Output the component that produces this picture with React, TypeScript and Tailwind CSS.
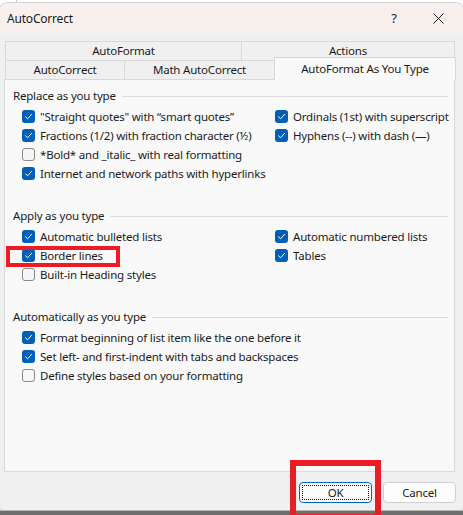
import React from "react";

type Item = { label: string; checked: boolean };

const Check = ({ checked }: { checked: boolean }) =>
  checked ? (
    <span className="flex h-[13px] w-[13px] shrink-0 items-center justify-center rounded-[3px] bg-[#005fb8]">
      <svg width="9" height="9" viewBox="0 0 9 9" fill="none">
        <path d="M1.5 4.8 3.6 6.8 7.6 2.3" stroke="#ffffff" strokeWidth="1" strokeLinecap="round" strokeLinejoin="round" />
      </svg>
    </span>
  ) : (
    <span className="h-[13px] w-[13px] shrink-0 rounded-[3px] border border-[#8a8a8a] bg-[#f6f6f6]" />
  );

const Row = ({ item }: { item: Item }) => (
  <div className="flex h-[19px] items-center gap-[5px]">
    <Check checked={item.checked} />
    <span className="whitespace-nowrap">{item.label}</span>
  </div>
);

const Section = ({
  title,
  left,
  right = [],
  className = "",
}: {
  title: string;
  left: Item[];
  right?: Item[];
  className?: string;
}) => (
  <div className={className}>
    <div className="flex h-4 items-center gap-[6px]">
      <span className="whitespace-nowrap">{title}</span>
      <div className="h-px flex-1 bg-[#dcdcdc]" />
    </div>
    <div className="mt-[3px] ml-[9px] grid grid-cols-[253px_1fr]">
      <div className="flex flex-col">
        {left.map((it) => (
          <Row key={it.label} item={it} />
        ))}
      </div>
      <div className="flex flex-col">
        {right.map((it) => (
          <Row key={it.label} item={it} />
        ))}
      </div>
    </div>
  </div>
);

const Tab = ({ label, className = "" }: { label: string; className?: string }) => (
  <div
    className={
      "flex items-center justify-center border-t border-l border-[#d9d9d9] bg-[#f0f0f0] " + className
    }
  >
    {label}
  </div>
);

export default function App() {
  return (
    <div
      className="relative h-[515px] w-[463px] overflow-hidden bg-white text-[11.5px] tracking-[-0.2px] text-[#1b1b1b]"
      style={{ fontFamily: '"Noto Sans", "Liberation Sans", sans-serif' }}
    >
      {/* window behind */}
      <div className="h-[3px] w-[17px] border-r border-[#c8c8c8]" />

      <div className="flex h-[507px] flex-col overflow-hidden rounded-t-[7px] rounded-b-[4px] bg-[#f0f0f0] shadow-[0_0_0_1px_#d6d6d6]">
        {/* title bar */}
        <div className="flex h-[31px] shrink-0 items-center bg-[#f8f0ec] pl-[7px]">
          <span className="text-[12px]">AutoCorrect</span>
          <span className="ml-auto w-[40px] text-center text-[13px]">?</span>
          <span className="mr-[5px] ml-[4px] flex w-[40px] justify-center">
            <svg width="11" height="11" viewBox="0 0 11 11">
              <path d="M0.5 0.5 10.5 10.5 M10.5 0.5 0.5 10.5" stroke="#1b1b1b" strokeWidth="1" />
            </svg>
          </span>
        </div>

        {/* tabs */}
        <div className="mt-[7px] flex flex-col px-[4px]">
          <div className="ml-px flex h-[19px] w-[450px]">
            <Tab label="AutoFormat" className="w-[236px]" />
            <Tab label="Actions" className="flex-1 border-r" />
          </div>
          <div className="relative ml-px flex h-[19px] w-[450px]">
            <Tab label="AutoCorrect" className="w-[119px]" />
            <Tab label="Math AutoCorrect" className="w-[150px]" />
            <div className="absolute top-[-3px] right-[-1px] z-10 flex h-[23px] w-[182px] items-start justify-center border-x border-t border-[#d9d9d9] bg-[#f9f9f9] pt-[2px]">
              AutoFormat As You Type
            </div>
          </div>

          {/* panel */}
          <div className="h-[393px] w-[451px] border border-[#d9d9d9] bg-[#f9f9f9] px-[8px] pt-[8px] pr-[6px]">
            <Section
              title="Replace as you type"
              left={[
                { label: '"Straight quotes" with \u201Csmart quotes\u201D', checked: true },
                { label: "Fractions (1/2) with fraction character (\u00BD)", checked: true },
                { label: "*Bold* and _italic_ with real formatting", checked: false },
                { label: "Internet and network paths with hyperlinks", checked: true },
              ]}
              right={[
                { label: "Ordinals (1st) with superscript", checked: true },
                { label: "Hyphens (--) with dash (\u2014)", checked: true },
              ]}
            />
            <Section
              className="mt-[25px]"
              title="Apply as you type"
              left={[
                { label: "Automatic bulleted lists", checked: true },
                { label: "Border lines", checked: true },
                { label: "Built-in Heading styles", checked: false },
              ]}
              right={[
                { label: "Automatic numbered lists", checked: true },
                { label: "Tables", checked: true },
              ]}
            />
            <Section
              className="mt-[25px]"
              title="Automatically as you type"
              left={[
                { label: "Format beginning of list item like the one before it", checked: true },
                { label: "Set left- and first-indent with tabs and backspaces", checked: true },
                { label: "Define styles based on your formatting", checked: false },
              ]}
            />
          </div>
        </div>

        {/* buttons */}
        <div className="mt-[10px] flex justify-end gap-[11px] pr-[7px]">
          <button className="flex h-[21px] w-[73px] items-center justify-center rounded-[4px] border border-[#0067c0] bg-[#fdfdfd] p-[2px]">
            <span className="flex h-full w-full items-center justify-center border border-dotted border-[#1b1b1b]">
              OK
            </span>
          </button>
          <button className="h-[21px] w-[73px] rounded-[4px] border border-[#d0d0d0] bg-[#fdfdfd]">
            Cancel
          </button>
        </div>
      </div>

      {/* desktop edge below */}
      <div className="h-[1px] bg-[#b9b9b9]" />
      <div className="h-[4px] bg-[#6e6e6e]" />

      {/* annotations */}
      <div className="absolute top-[246px] left-[6px] h-[21px] w-[114px] border-[4px] border-[#ec1c24]" />
      <div className="absolute top-[460px] left-[290px] h-[60px] w-[91px] border-[6px] border-[#ec1c24]" />
    </div>
  );
}
